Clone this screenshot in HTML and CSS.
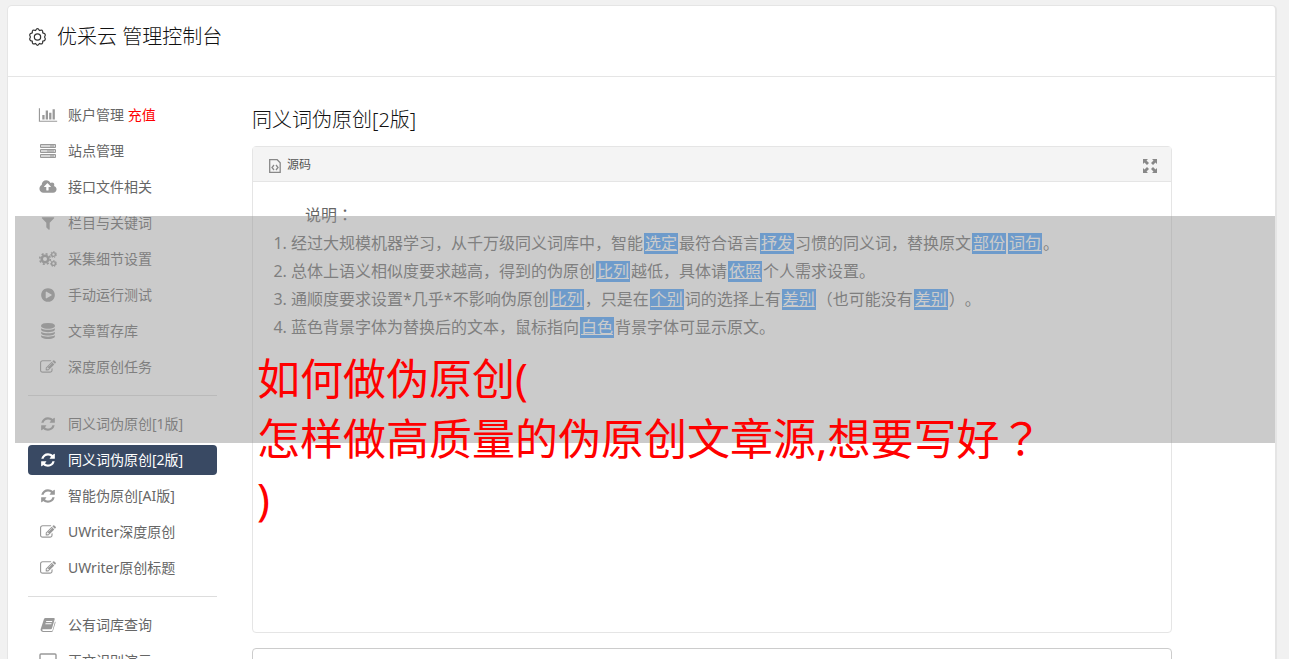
FILE: index.html
```html
<!DOCTYPE html>
<html lang="zh-CN">
<head>
  <meta charset="UTF-8">
  <title>优采云 管理控制台</title>
  <link rel="stylesheet" href="styles.css">
</head>
<body>

  <!-- Icon set -->
  <svg class="icon-defs" aria-hidden="true">
    <symbol id="i-chart" viewBox="0 0 2048 1792"><path d="M640 896v512h-256v-512h256zm384-512v1024h-256v-1024h256zm1024 1152v128h-2048v-1536h128v1408h1920zm-640-896v768h-256v-768h256zm384-384v1152h-256v-1152h256z"/></symbol>
    <symbol id="i-server" viewBox="0 0 20 16"><g fill="currentColor" fill-opacity=".4" stroke="currentColor"><path d="M2.500 1.500h15v3h-15zM2.500 6.500h15v3h-15zM2.500 11.500h15v3h-15z"/><path d="M12 3h4M9 8h7M12 13h4"/></g></symbol>
    <symbol id="i-cloud" viewBox="0 0 1920 1792"><path d="M1280 864q0-14-9-23l-352-352q-9-9-23-9t-23 9l-351 351q-10 12-10 24 0 14 9 23t23 9h224v352q0 13 9.500 22.500t22.500 9.500h192q13 0 22.500-9.500t9.500-22.500v-352h224q13 0 22.500-9.500t9.500-22.500zm640 288q0 159-112.500 271.500t-271.500 112.500h-1088q-185 0-316.500-131.500t-131.500-316.500q0-130 70-240t188-165q-2-30-2-43 0-212 150-362t362-150q156 0 285.500 87t188.500 231q71-62 166-62 106 0 181 75t75 181q0 76-41 138 130 31 213.500 135.500t83.500 238.500z"/></symbol>
    <symbol id="i-filter" viewBox="0 0 1792 1792"><path d="M1595 295q17 41-14 70l-493 493v742q0 42-39 59-13 5-25 5-27 0-45-19l-256-256q-19-19-19-45v-486l-493-493q-31-29-14-70 17-39 59-39h1280q42 0 59 39z"/></symbol>
    <symbol id="i-cogs" viewBox="0 0 18 16"><g fill="none" stroke="currentColor"><circle cx="6" cy="8" r="3.300" stroke-width="2.600"/><circle cx="6" cy="8" r="5.300" stroke-width="1.600" stroke-dasharray="2.080 2.080"/><circle cx="14.500" cy="3.500" r="1.900" stroke-width="1.400"/><circle cx="14.500" cy="3.500" r="3" stroke-width="1" stroke-dasharray="1.350 1.350"/><circle cx="14.500" cy="12.500" r="1.900" stroke-width="1.400"/><circle cx="14.500" cy="12.500" r="3" stroke-width="1" stroke-dasharray="1.350 1.350"/></g></symbol>
    <symbol id="i-play" viewBox="0 0 1792 1792"><path d="M896 128q209 0 385.500 103t279.500 279.500 103 385.500-103 385.500-279.500 279.500-385.500 103-385.500-103-279.500-279.500-103-385.500 103-385.500 279.500-279.500 385.500-103zm384 823q32-18 32-55t-32-55l-544-320q-31-19-64-1-32 19-32 56v640q0 37 32 56 16 8 32 8 17 0 32-9z"/></symbol>
    <symbol id="i-database" viewBox="0 0 1792 1792"><path d="M896 768q237 0 443-43t325-127v170q0 69-103 128t-280 93.500-385 34.500-385-34.500-280-93.500-103-128v-170q119 84 325 127t443 43zm0 768q237 0 443-43t325-127v170q0 69-103 128t-280 93.500-385 34.500-385-34.500-280-93.500-103-128v-170q119 84 325 127t443 43zm0-384q237 0 443-43t325-127v170q0 69-103 128t-280 93.500-385 34.500-385-34.500-280-93.500-103-128v-170q119 84 325 127t443 43zm0-1152q208 0 385 34.500t280 93.500 103 128v128q0 69-103 128t-280 93.500-385 34.500-385-34.500-280-93.500-103-128v-128q0-69 103-128t280-93.500 385-34.500z"/></symbol>
    <symbol id="i-edit" viewBox="0 0 1792 1792"><path d="M888 1184l116-116-152-152-116 116v56h96v96h56zm440-720q-16-16-33 1l-350 350q-17 17-1 33t33-1l350-350q17-17 1-33zm80 594v190q0 119-84.500 203.500t-203.500 84.500h-832q-119 0-203.500-84.500t-84.500-203.500v-832q0-119 84.500-203.500t203.500-84.500h832q63 0 117 25 15 7 18 23 3 17-9 29l-49 49q-14 14-32 8-23-6-45-6h-832q-66 0-113 47t-47 113v832q0 66 47 113t113 47h832q66 0 113-47t47-113v-126q0-13 9-22l64-64q15-15 35-7t20 29zm-96-738l288 288-672 672h-288v-288zm444 132l-92 92-288-288 92-92q28-28 68-28t68 28l152 152q28 28 28 68t-28 68z"/></symbol>
    <symbol id="i-refresh" viewBox="0 0 1792 1792"><path d="M1639 1056q0 5-1 7-64 268-268 434.500t-478 166.500q-146 0-282.500-55t-243.500-157l-129 129q-19 19-45 19t-45-19-19-45v-448q0-26 19-45t45-19h448q26 0 45 19t19 45-19 45l-137 137q71 66 161 102t187 36q134 0 250-65t186-179q11-17 53-117 8-23 30-23h192q13 0 22.500 9.500t9.500 22.500zm25-800v448q0 26-19 45t-45 19h-448q-26 0-45-19t-19-45 19-45l138-138q-148-137-349-137-134 0-250 65t-186 179q-11 17-53 117-8 23-30 23h-199q-13 0-22.500-9.500t-9.500-22.500v-7q65-268 270-434.500t480-166.500q146 0 284 55.500t245 156.500l130-129q19-19 45-19t45 19 19 45z"/></symbol>
    <symbol id="i-book" viewBox="0 0 16 16"><path fill-rule="evenodd" d="M5.500 1h8.300q1.200 0 .9 1.200L12 11.300q-.3 1-1.300 1H2.800q-.8 0-.5.900t1.200.8h8.200q.6 0 .8-.6L15 4.500q.8.400.5 1.300l-2.500 8q-.4 1.200-1.600 1.200H3q-1.600 0-2.200-1.400-.4-.8-.1-1.700L3.900 2.200Q4.300 1 5.500 1zM6.300 4l-.3 1h6l.3-1zM5.600 6.300l-.3 1h6l.3-1z"/></symbol>
    <symbol id="i-monitor" viewBox="0 0 18 16"><rect x="1" y="1" width="16" height="12" rx="1" fill="none" stroke="currentColor" stroke-width="1.400"/><path d="M6 14h6v2H6z"/></symbol>
    <symbol id="i-gear" viewBox="0 0 20 20"><g fill="none" stroke="currentColor" stroke-width="1.300" stroke-linejoin="round"><path d="M8 3.200 Q10 -.6 12 3.200 Q15.900 1.400 15.500 5.600 Q19.700 6.500 17.400 10 Q19.700 13.500 15.500 14.400 Q15.900 18.600 12 16.800 Q10 20.600 8 16.800 Q4.100 18.600 4.500 14.400 Q.3 13.500 2.600 10 Q.3 6.500 4.500 5.600 Q4.100 1.400 8 3.200Z"/><circle cx="10" cy="10" r="3.300"/></g></symbol>
    <symbol id="i-code" viewBox="0 0 12 14"><g fill="none" stroke="currentColor" stroke-width="1.300"><path d="M.7.700h7.500l3 3v9.600H.7z"/><path d="M5 6 3 8.500 5 11M7 6l2 2.500L7 11"/></g></symbol>
    <symbol id="i-expand" viewBox="0 0 14 14"><path d="M0 0h5L3.500 1.500 6 4 4 6 1.500 3.500 0 5zM14 0v5l-1.500-1.500L10 6 8 4l2.500-2.500L9 0zM0 14V9l1.500 1.500L4 8l2 2-2.500 2.500L5 14zM14 14H9l1.500-1.500L8 10l2-2 2.500 2.500L14 9z"/></symbol>
  </svg>

  <div class="container">
    <header class="page-header">
      <svg class="gear"><use href="#i-gear"/></svg>
      <h1>优采云 管理控制台</h1>
    </header>

    <div class="content">
      <nav class="sidebar">
        <a href="#"><svg><use href="#i-chart"/></svg><span>账户管理 <em>充值</em></span></a>
        <a href="#"><svg><use href="#i-server"/></svg>站点管理</a>
        <a href="#"><svg><use href="#i-cloud"/></svg>接口文件相关</a>
        <a href="#"><svg><use href="#i-filter"/></svg>栏目与关键词</a>
        <a href="#"><svg><use href="#i-cogs"/></svg>采集细节设置</a>
        <a href="#"><svg><use href="#i-play"/></svg>手动运行测试</a>
        <a href="#"><svg><use href="#i-database"/></svg>文章暂存库</a>
        <a href="#"><svg><use href="#i-edit"/></svg>深度原创任务</a>
        <hr>
        <a href="#"><svg><use href="#i-refresh"/></svg>同义词伪原创[1版]</a>
        <a href="#" class="active"><svg><use href="#i-refresh"/></svg>同义词伪原创[2版]</a>
        <a href="#"><svg><use href="#i-refresh"/></svg>智能伪原创[AI版]</a>
        <a href="#"><svg><use href="#i-edit"/></svg>UWriter深度原创</a>
        <a href="#"><svg><use href="#i-edit"/></svg>UWriter原创标题</a>
        <hr>
        <a href="#"><svg><use href="#i-book"/></svg>公有词库查询</a>
        <a href="#"><svg><use href="#i-monitor"/></svg>正文识别演示</a>
      </nav>

      <main class="main">
        <h2>同义词伪原创[2版]</h2>

        <div class="editor">
          <div class="toolbar">
            <button type="button" class="source-btn"><svg><use href="#i-code"/></svg>源码</button>
            <button type="button" class="full-btn" aria-label="全屏"><svg><use href="#i-expand"/></svg></button>
          </div>
          <div class="editor-body">
            <p>说明<span lang="ja">：</span></p>
            <ol>
              <li>经过大规模机器学习，从千万级同义词库中，智能<mark>选定</mark>最符合语言<mark>抒发</mark>习惯的同义词，替换原文<mark>部份</mark><mark>词句</mark>。</li>
              <li>总体上语义相似度要求越高，得到的伪原创<mark>比列</mark>越低，具体请<mark>依照</mark>个人需求设置。</li>
              <li>通顺度要求设置*几乎*不影响伪原创<mark>比列</mark>，只是在<mark>个别</mark>词的选择上有<mark>差别</mark>（也可能没有<mark>差别</mark>）。</li>
              <li>蓝色背景字体为替换后的文本，鼠标指向<mark>白色</mark>背景字体可显示原文。</li>
            </ol>
          </div>
        </div>

        <textarea class="result" aria-label="结果"></textarea>
      </main>
    </div>

    <!-- Headline laid over the page -->
    <div class="banner">
      <p>如何做伪原创(<br>怎样做高质量的伪原创文章源,想要写好<span lang="ja">？</span><br>)</p>
    </div>
  </div>

</body>
</html>
```

FILE: styles.css
```css
* {
  box-sizing: border-box;
}

body {
  margin: 0;
  padding: 5px 12px 0 7px;
  height: 100vh;
  overflow: hidden;
  background-color: #f1f1f1;
  font-family: "Noto Sans", "Noto Sans CJK SC", sans-serif;
  font-size: 14px;
  color: #333;
  text-spacing-trim: space-all;
}

.icon-defs {
  display: none;
}

svg {
  fill: currentColor;
}

.container {
  position: relative;
  height: 100%;
  overflow: hidden;
  background-color: white;
  border: 1px solid #e5e5e5;
  border-right-width: 2px;
  border-bottom: 0;
  border-radius: 5px 5px 0 0;
}

.page-header {
  display: flex;
  align-items: center;
  gap: 10px;
  height: 71px;
  padding: 0 20px 8px;
  border-bottom: 1px solid #e5e5e5;
}

.gear {
  width: 19px;
  height: 20px;
}

h1, h2 {
  margin: 0;
  color: #111;
  font-size: 20px;
  font-weight: 300;
  line-height: 30px;
}

.content {
  display: flex;
  gap: 35px;
  padding: 23px 103px 0 20px;
}

.sidebar {
  flex: 0 0 189px;
}

.sidebar a {
  display: flex;
  align-items: center;
  gap: 10px;
  height: 30px;
  margin-bottom: 6px;
  padding-left: 10px;
  border-radius: 4px;
  color: #666;
  line-height: 18px;
  text-decoration: none;
}

.sidebar svg {
  width: 20px;
  height: 16px;
  color: #999;
}

.sidebar em {
  color: red;
  font-style: normal;
}

.sidebar .active {
  background-color: #394963;
  color: white;
}

.sidebar .active svg {
  color: white;
}

.sidebar hr {
  margin: 13px 0;
  border: 0;
  border-top: 1px solid #ddd;
}

.main {
  flex: 1;
  padding-top: 5px;
}

.editor {
  min-height: 487px;
  margin-top: 11px;
  border: 1px solid #e5e5e5;
  border-radius: 4px;
}

.toolbar {
  display: flex;
  justify-content: space-between;
  height: 35px;
  padding: 0 14px 0 16px;
  background-color: #f4f4f4;
  border-bottom: 1px solid #e5e5e5;
}

.toolbar button {
  display: flex;
  align-items: center;
  gap: 6px;
  padding: 0;
  border: 0;
  background: none;
  color: #555;
  font: inherit;
  font-size: 12px;
  cursor: pointer;
}

.toolbar svg {
  width: 12px;
  height: 14px;
  margin-top: 4px;
  color: #888;
}

.toolbar .full-btn svg {
  width: 14px;
}

.editor-body {
  padding: 19px 20px;
  color: #666;
  font-size: 16px;
  line-height: 28px;
}

.editor-body p {
  margin: 0;
  text-indent: 2em;
}

.editor-body ol {
  margin: 0;
  padding-left: 18px;
}

mark {
  margin: 0 1px;
  padding: 0 1px;
  background: linear-gradient(#459fff, #459fff) center / 100% 21px no-repeat;
  color: white;
  text-decoration: underline;
}

.result {
  display: block;
  width: 100%;
  height: 120px;
  margin-top: 15px;
  border: 1px solid #ccc;
  border-radius: 4px;
  resize: none;
}

.banner {
  position: absolute;
  top: 210px;
  left: 7px;
  right: 0;
  height: 227px;
  padding: 133px 0 0 242px;
  background-color: rgba(151, 151, 151, 0.5);
}

.banner p {
  margin: 0;
  color: red;
  font-size: 43px;
  line-height: 60px;
  white-space: nowrap;
}
```
